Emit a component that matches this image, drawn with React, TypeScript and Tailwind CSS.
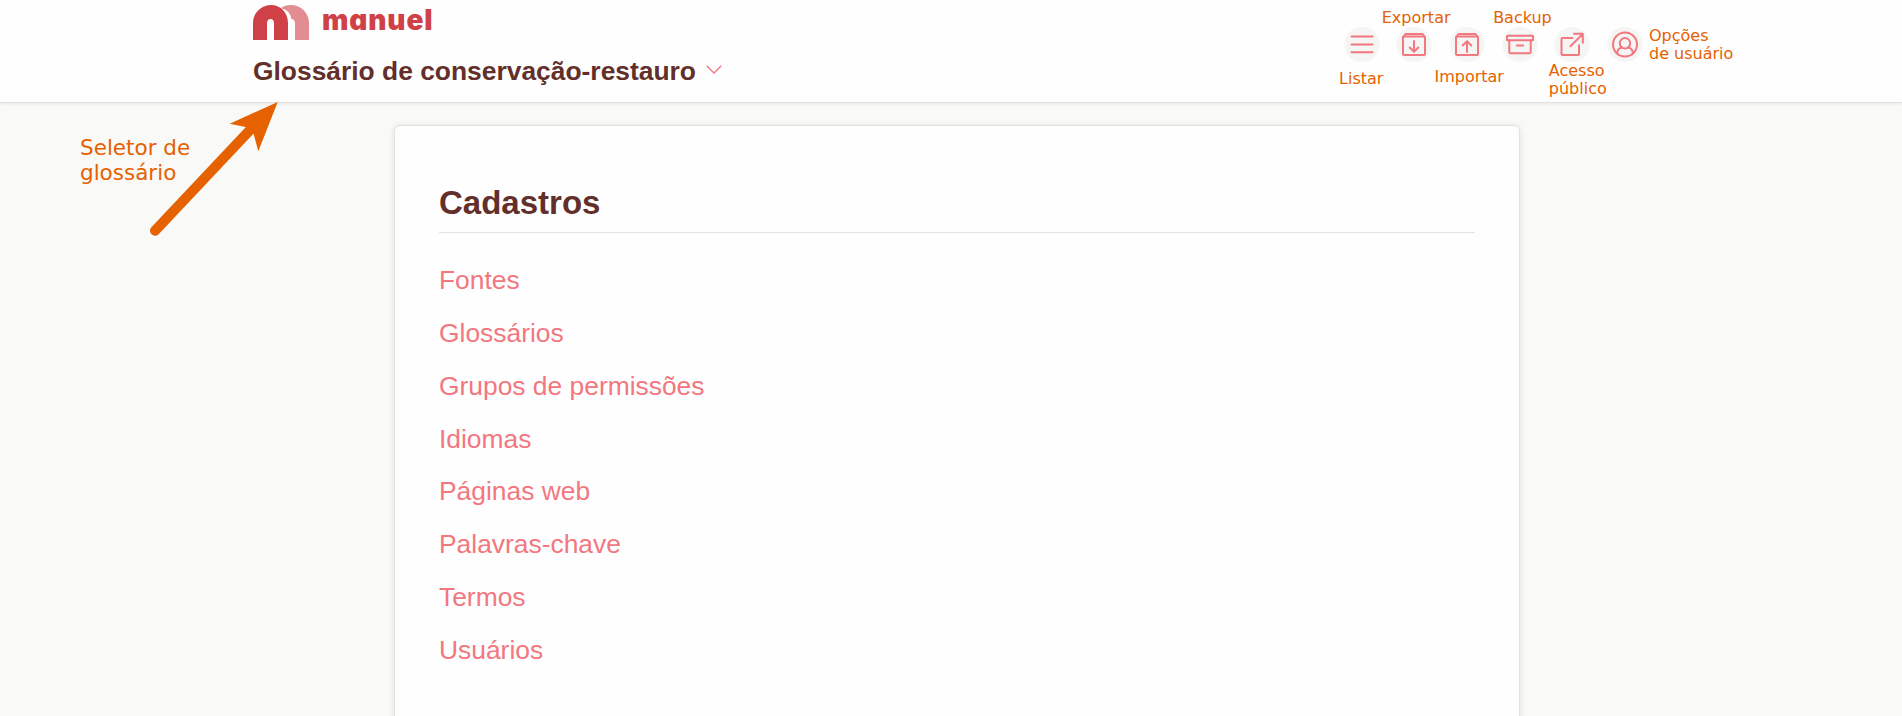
import React from "react";

type IconName = "list" | "export" | "import" | "backup" | "external" | "user";

function Icon({ name }: { name: IconName }) {
  return (
    <svg viewBox="0 0 36 36" className="size-9 shrink-0" fill="none" stroke="#f2777f" strokeWidth="2" strokeLinecap="round" strokeLinejoin="round">
      <circle cx="18" cy="17.5" r="17.6" fill="#f5f5f4" stroke="none" />
      {name === "list" && <path d="M7.5 9.5H28.5M7.5 17.5H28.5M7.5 25.2H28.5" />}
      {(name === "export" || name === "import") && (
        <>
          <rect x="7" y="9.5" width="22" height="18.5" rx="1" />
          <path d="M7.5 9.5L9.5 7H26.5L28.5 9.5" />
          <path d={name === "export" ? "M18 14V24.5M13.7 20.5L18 24.8L22.3 20.5" : "M18 25V14.5M13.7 18.5L18 14.2L22.3 18.5"} />
        </>
      )}
      {name === "backup" && (
        <>
          <rect x="5" y="8.8" width="26" height="4.5" rx="0.6" />
          <path d="M7.3 13.3V25Q7.3 26.3 8.6 26.3H27.4Q28.7 26.3 28.7 25V13.3M14.8 18.5H21.2" />
        </>
      )}
      {name === "external" && (
        <path d="M18.5 11H8.5Q7.5 11 7.5 12V27.1Q7.5 28.1 8.5 28.1H24Q25 28.1 25 27.1V18.3M16.5 19.3L28.5 7.1M20 6.8H28.8V15.8" />
      )}
      {name === "user" && (
        <>
          <circle cx="18" cy="17.5" r="12" />
          <circle cx="18" cy="16.3" r="5.2" />
          <path d="M10 25.7Q11 21.1 15 20.5M26 25.7Q25 21.1 21 20.5" />
        </>
      )}
    </svg>
  );
}

interface Action {
  icon: IconName;
  label: string;
  place: string;
}

const actions: Action[] = [
  { icon: "list", label: "Listar", place: "left-[-4.5px] top-[43px]" },
  { icon: "export", label: "Exportar", place: "left-[-14.5px] top-[-18px]" },
  { icon: "import", label: "Importar", place: "left-[-14.5px] top-[41px]" },
  { icon: "backup", label: "Backup", place: "left-[-8.5px] top-[-18px]" },
  { icon: "external", label: "Acesso\npúblico", place: "left-[-5.5px] top-[35px]" },
  { icon: "user", label: "Opções\nde usuário", place: "left-[42px] top-0" },
];

const entries = ["Fontes", "Glossários", "Grupos de permissões", "Idiomas", "Páginas web", "Palavras-chave", "Termos", "Usuários"];

function Logo() {
  return (
    <div className="flex h-[41px] items-start pt-[5px]">
      <svg viewBox="0 0 56 35" className="h-[35px] w-14">
        <path d="M28 3.2C30.5 1.2 34 0 38 0C48 0 56 8 56 18V35H42V18.5C42 15.8 40.5 14 38.3 14C38.3 9.5 34.5 4.5 28 3.2Z" fill="#e28d91" />
        <path d="M0 35V18C0 8 8 0 18 0C28 0 35 8 35 18V35H21V18.5Q21 14 17.5 14Q14 14 14 18.5V35Z" fill="#d04147" />
      </svg>
      <span
        className="mt-[-3px] ml-[13px] font-['Inter',sans-serif] text-[28px] leading-[36px] font-black tracking-[0.9px] text-[#d04147]"
        style={{ fontFeatureSettings: '"cv11" 1' }}
      >
        manuel
      </span>
    </div>
  );
}

export default function App() {
  return (
    <div className="relative h-[716px] overflow-hidden bg-[#f9f9f7] font-['Liberation_Sans',sans-serif]">
      <header className="flex h-[103px] items-start justify-between border-b border-[#e2e2e1] bg-[#fefefe] pl-[253px] pr-[259px] shadow-[0_1px_3px_rgba(0,0,0,0.08)]">
        <div>
          <Logo />
          <button className="mt-[10px] flex items-center whitespace-nowrap text-[26.4px] leading-[40px] font-bold text-[#632f2a]">
            Glossário de conservação-restauro
            <svg viewBox="0 0 16 9" className="mt-[-4px] ml-[10px] h-[9px] w-4" fill="none" stroke="#f2777f" strokeWidth="1.3">
              <path d="M0.7 0.7L8 8L15.3 0.7" />
            </svg>
          </button>
        </div>
        <nav className="flex gap-[16.7px] pt-[27px]">
          {actions.map((a) => (
            <div key={a.label} className="relative size-9">
              <Icon name={a.icon} />
              <span className={`absolute whitespace-pre font-['DejaVu_Sans',sans-serif] text-[16px] leading-[18px] text-[#e66100] ${a.place}`}>{a.label}</span>
            </div>
          ))}
        </nav>
      </header>

      <main className="mt-[22px] ml-[394px] h-[700px] w-[1126px] rounded-md border border-[#e2e2e1] bg-[#fefefe] px-11 pt-[52px] shadow-[0_1px_6px_rgba(0,0,0,0.1)]">
        <h1 className="h-[55px] border-b border-[#e2e2e1] text-[33px] leading-[50px] font-bold text-[#632f2a]">Cadastros</h1>
        <ul className="mt-[21px]">
          {entries.map((e) => (
            <li key={e} className="h-[52.86px] text-[26.4px] leading-[53px] text-[#f2777f]">{e}</li>
          ))}
        </ul>
      </main>

      <p className="absolute left-20 top-[135px] whitespace-pre font-['DejaVu_Sans',sans-serif] text-[21.5px] leading-[25px] text-[#e66100]">{"Seletor de\nglossário"}</p>
      <svg viewBox="0 0 140 140" className="absolute left-[145px] top-[102px] size-[140px]">
        <path d="M10 128.7L105 28" stroke="#e66100" strokeWidth="10" strokeLinecap="round" />
        <path d="M132.7 0L84.7 21.7L101.7 25.3L108.7 32L113.3 49.3Z" fill="#e66100" />
      </svg>
    </div>
  );
}
